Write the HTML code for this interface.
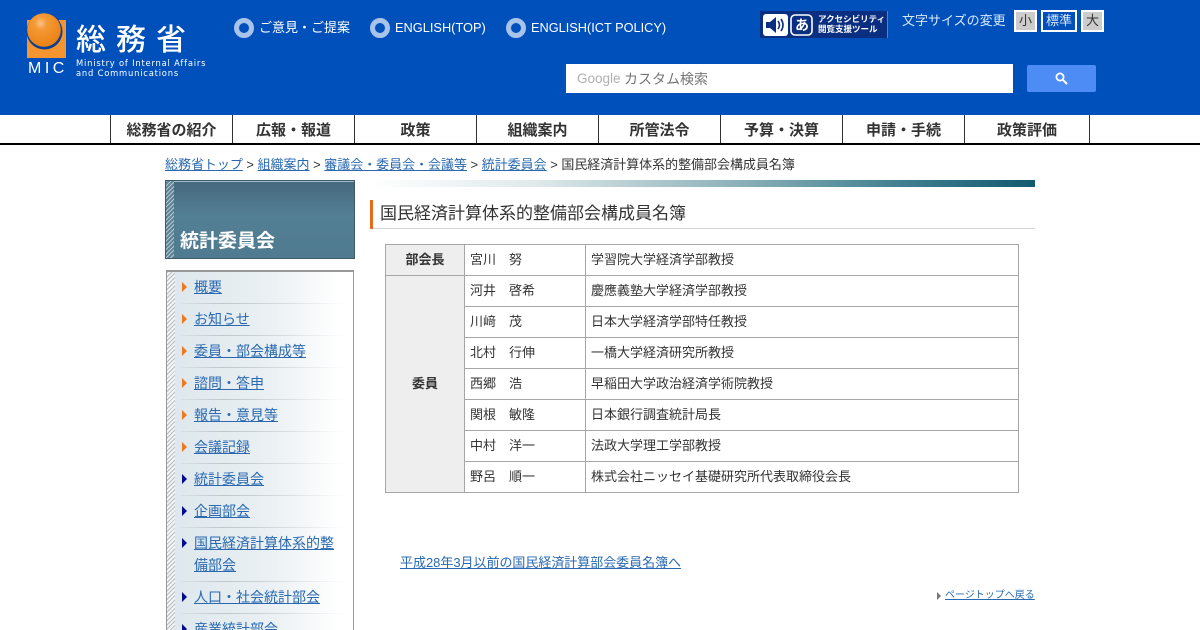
<!DOCTYPE html>
<html lang="ja"><head><meta charset="utf-8"><title>国民経済計算体系的整備部会構成員名簿</title>
<style>
html,body{margin:0;padding:0;background:#fff;width:1200px;height:630px;overflow:hidden}
#w{position:relative;width:1200px;height:630px;overflow:hidden;font-family:"Liberation Sans","Noto Sans CJK JP",sans-serif;font-size:13px;color:#333}
.a{position:absolute;white-space:nowrap}
a{color:#2a69b0;text-decoration:underline}
#hd{position:absolute;left:0;top:0;width:1200px;height:115px;background:#0050bc}
#nav{position:absolute;left:0;top:115px;width:1200px;height:28px;background:#fff;border-bottom:2px solid #000}
.nv{position:absolute;top:0;height:28px;width:121px;border-left:1px solid #333;text-align:center;font-weight:bold;font-size:15px;line-height:32px;color:#333}
.rd{position:absolute;top:18px;width:10px;height:10px;border:5px solid #a9c4ea;border-radius:50%;background:#0050bc}
.sz{position:absolute;top:10px;height:18px;background:#ccc;border:2px solid #fff;text-align:center;line-height:18px;font-size:13px;color:#333}
#tb{position:absolute;left:385px;top:244px;border-collapse:collapse;table-layout:fixed;width:634px}
#tb td,#tb th{border:1px solid #a6a6a6;height:30px;padding:0 5px;font-size:13px;font-weight:normal;color:#333;white-space:nowrap;line-height:30px}
#tb th{background:#eee;font-weight:bold;text-align:center;padding:0}
#menu{position:absolute;left:166px;top:270px;width:186px;height:370px;border:1px solid #999;border-top-width:2px;background:linear-gradient(90deg,#dde7ed 0%,#eaf0f3 55%,#fff 92%)}
#stripe{position:absolute;left:0;top:0;width:8px;height:100%;background:repeating-linear-gradient(135deg,#b4bec3 0 1px,#f2f4f5 1px 3px)}
.m{position:absolute;left:27px;width:150px;font-size:14px;line-height:22px}
.t{position:absolute;left:15px;width:0;height:0;border-left:5px solid #ec7a1c;border-top:5px solid transparent;border-bottom:5px solid transparent}
.t.b{border-left-color:#000c8c}
.l{position:absolute;left:14px;width:165px;height:1px;background:linear-gradient(90deg,rgba(190,196,199,.2),#c0c6c9 25%,rgba(200,205,208,0))}
</style></head><body><div id="w">
<div id="hd">
<svg class="a" style="left:25px;top:10px" width="48" height="68" viewBox="0 0 48 68">
<defs><radialGradient id="g" cx=".4" cy=".3" r=".75"><stop offset="0" stop-color="#fbc489"/><stop offset=".25" stop-color="#f49a35"/><stop offset="1" stop-color="#ea7f12"/></radialGradient></defs>
<rect x="2" y="10" width="39" height="38" fill="#f4952f"/>
<circle cx="19.5" cy="21.5" r="18" fill="#0a3f94"/>
<circle cx="19" cy="20" r="16.8" fill="url(#g)"/>
</svg>
<div class="a" style="left:28px;top:59px;font-size:16px;letter-spacing:3.5px;color:#fff;line-height:20px">MIC</div>
<div class="a" style="left:76px;top:17px;font-size:30px;font-weight:500;letter-spacing:10px;color:#fff;line-height:40px;font-family:'Noto Sans CJK JP',sans-serif">総務省</div>
<div class="a" style="left:76px;top:59px;font-size:9px;line-height:10px;letter-spacing:.85px;color:#fff;font-family:'DejaVu Sans',sans-serif;transform:scaleX(.93);transform-origin:0 0">Ministry of Internal Affairs<br>and Communications</div>
<div class="rd" style="left:234px"></div><div class="a" style="left:259px;top:19px;color:#fff;line-height:18px">ご意見・ご提案</div>
<div class="rd" style="left:370px"></div><div class="a" style="left:395px;top:19px;color:#fff;line-height:18px;font-size:12.8px">ENGLISH(TOP)</div>
<div class="rd" style="left:506px"></div><div class="a" style="left:531px;top:19px;color:#fff;line-height:18px;font-size:12.75px">ENGLISH(ICT POLICY)</div>
<div class="a" style="left:760px;top:11px;width:127px;height:27px;background:#0b2f80;border-right:1px solid #5d7fc0"></div>
<svg class="a" style="left:763px;top:14px" width="50" height="22" viewBox="0 0 50 22"><rect width="25" height="22" rx="3" fill="#fff"/><path d="M3 8h4l6-5v16l-6-5H3z" fill="#0b2f80"/><path d="M15 7q3 4 0 8M18 5q4 6 0 12" fill="none" stroke="#0b2f80" stroke-width="1.6"/><rect x="28" y="1" width="21" height="20" rx="4" fill="#0b2f80" stroke="#fff" stroke-width="1.6"/></svg>
<div class="a" style="left:795px;top:15px;font-size:14px;line-height:20px;color:#fff;font-weight:bold">あ</div>
<div class="a" style="left:818px;top:14px;font-size:8.5px;line-height:10px;color:#fff;font-weight:bold">アクセシビリティ<br>閲覧支援ツール</div>
<div class="a" style="left:902px;top:11px;color:#d8e6fa;line-height:20px">文字サイズの変更</div>
<div class="sz" style="left:1014px;width:19px">小</div>
<div class="sz" style="left:1041px;width:32px;background:#0050bc;color:#d8e6fa;border-color:#fff">標準</div>
<div class="sz" style="left:1081px;width:19px">大</div>
<div class="a" style="left:566px;top:64px;width:447px;height:29px;background:#fff"></div>
<div class="a" style="left:577px;top:70px;font-size:13.5px;line-height:18px;color:#b0b0b0">Google</div>
<div class="a" style="left:624px;top:70px;font-size:14px;line-height:19px;color:#757575">カスタム検索</div>
<div class="a" style="left:1027px;top:65px;width:69px;height:27px;background:#4d8cf5;border-radius:2px"></div>
<svg class="a" style="left:1055px;top:72px" width="13" height="13" viewBox="0 0 13 13"><circle cx="5" cy="5" r="3.6" fill="none" stroke="#fff" stroke-width="1.8"/><path d="M7.8 7.8L12 12" stroke="#fff" stroke-width="2"/></svg>
</div>
<div id="nav">
<div class="nv" style="left:110px">総務省の紹介</div>
<div class="nv" style="left:232px">広報・報道</div>
<div class="nv" style="left:354px">政策</div>
<div class="nv" style="left:476px">組織案内</div>
<div class="nv" style="left:598px">所管法令</div>
<div class="nv" style="left:720px">予算・決算</div>
<div class="nv" style="left:842px">申請・手続</div>
<div class="nv" style="left:964px;width:124px;border-right:1px solid #333">政策評価</div>
</div>
<div class="a" style="left:165px;top:156px;line-height:18px;font-size:12.98px"><a href="#">総務省トップ</a> &gt; <a href="#">組織案内</a> &gt; <a href="#">審議会・委員会・会議等</a> &gt; <a href="#">統計委員会</a> &gt; 国民経済計算体系的整備部会構成員名簿</div>

<div class="a" style="left:165px;top:180px;width:188px;height:77px;border:1px solid #3c5a68;background:linear-gradient(180deg,#45687c 0%,#537f95 45%,#4f7a90 100%)">
<div style="position:absolute;left:0;top:0;width:188px;height:1px;background:#a5bac4"></div>
<div style="position:absolute;left:0;top:0;width:8px;height:77px;background:repeating-linear-gradient(135deg,#b5c5cc 0 1px,#5d8397 1px 3px)"></div>
<div class="a" style="left:14px;top:47px;font-size:19px;font-weight:bold;color:#fff;line-height:28px">統計委員会</div>
</div>
<div id="menu"><div id="stripe"></div>
<div class="t" style="top:10px"></div><div class="m" style="top:4px"><a href="#">概要</a></div><div class="l" style="top:31px"></div>
<div class="t" style="top:42px"></div><div class="m" style="top:36px"><a href="#">お知らせ</a></div><div class="l" style="top:63px"></div>
<div class="t" style="top:74px"></div><div class="m" style="top:68px"><a href="#">委員・部会構成等</a></div><div class="l" style="top:95px"></div>
<div class="t" style="top:106px"></div><div class="m" style="top:100px"><a href="#">諮問・答申</a></div><div class="l" style="top:127px"></div>
<div class="t" style="top:138px"></div><div class="m" style="top:132px"><a href="#">報告・意見等</a></div><div class="l" style="top:159px"></div>
<div class="t" style="top:170px"></div><div class="m" style="top:164px"><a href="#">会議記録</a></div><div class="l" style="top:191px"></div>
<div class="t b" style="top:202px"></div><div class="m" style="top:196px"><a href="#">統計委員会</a></div><div class="l" style="top:223px"></div>
<div class="t b" style="top:234px"></div><div class="m" style="top:228px"><a href="#">企画部会</a></div><div class="l" style="top:255px"></div>
<div class="t b" style="top:266px"></div><div class="m" style="top:260px"><a href="#">国民経済計算体系的整備部会</a></div><div class="l" style="top:309px"></div>
<div class="t b" style="top:320px"></div><div class="m" style="top:314px"><a href="#">人口・社会統計部会</a></div><div class="l" style="top:341px"></div>
<div class="t b" style="top:352px"></div><div class="m" style="top:346px"><a href="#">産業統計部会</a></div>
</div>

<div class="a" style="left:370px;top:180px;width:665px;height:7px;background:linear-gradient(90deg,#fff 0%,#dfe9ea 25%,#8db1b9 55%,#3f7f90 80%,#135a70 100%)"></div>
<div class="a" style="left:370px;top:200px;width:3px;height:29px;background:#e9691a"></div>
<div class="a" style="left:373px;top:228px;width:662px;height:1px;background:#d4d4d4"></div>
<div class="a" style="left:380px;top:202px;font-size:17px;line-height:24px;color:#333">国民経済計算体系的整備部会構成員名簿</div>

<table id="tb"><colgroup><col style="width:79px"><col style="width:121px"><col></colgroup>
<tr><th>部会長</th><td>宮川　努</td><td>学習院大学経済学部教授</td></tr>
<tr><th rowspan="7">委員</th><td>河井　啓希</td><td>慶應義塾大学経済学部教授</td></tr>
<tr><td>川﨑　茂</td><td>日本大学経済学部特任教授</td></tr>
<tr><td>北村　行伸</td><td>一橋大学経済研究所教授</td></tr>
<tr><td>西郷　浩</td><td>早稲田大学政治経済学術院教授</td></tr>
<tr><td>関根　敏隆</td><td>日本銀行調査統計局長</td></tr>
<tr><td>中村　洋一</td><td>法政大学理工学部教授</td></tr>
<tr><td>野呂　順一</td><td>株式会社ニッセイ基礎研究所代表取締役会長</td></tr>
</table>

<div class="a" style="left:400px;top:554px;line-height:18px;font-size:12.98px"><a href="#">平成28年3月以前の国民経済計算部会委員名簿へ</a></div>
<div class="a" style="left:937px;top:592px;width:0;height:0;border-left:4px solid #777;border-top:4px solid transparent;border-bottom:4px solid transparent"></div>
<div class="a" style="left:945px;top:589px;font-size:10px;line-height:13px"><a href="#">ページトップへ戻る</a></div>
</div></body></html>
